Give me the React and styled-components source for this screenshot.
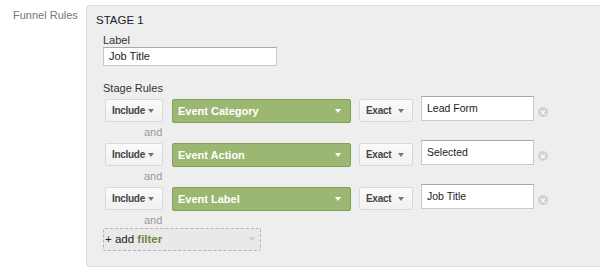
import React from 'react';
import styled, { createGlobalStyle } from 'styled-components';

const Global = createGlobalStyle`
  body {
    margin: 0;
    background: #fff;
    font-family: "Liberation Sans", Arial, sans-serif;
    color: #333;
  }
`;

const Page = styled.div`
  display: flex;
  width: 600px;
  height: 274px;
  overflow: hidden;
`;

const SideLabel = styled.div`
  width: 86px;
  flex-shrink: 0;
  padding: 9px 0 0 13px;
  box-sizing: border-box;
  font-size: 11px;
  color: #777;
`;

const Panel = styled.section`
  margin-top: 5px;
  width: 530px;
  height: 262px;
  box-sizing: border-box;
  background: #eeeeee;
  border: 1px solid #dadada;
  border-right: none;
  border-radius: 4px 0 0 4px;
  padding: 7px 0 0 9px;
`;

const StageTitle = styled.div`
  font-size: 11.5px;
  color: #222;
  line-height: 14px;
`;

const Field = styled.div`
  padding-left: 7px;
  margin-top: ${p => p.$top || 0}px;
`;

const FieldLabel = styled.div`
  font-size: 11px;
  color: #333;
  line-height: 13px;
`;

const TextInput = styled.div`
  width: ${p => p.$w}px;
  height: ${p => p.$h}px;
  box-sizing: border-box;
  background: #fff;
  border: 1px solid #c8c8c8;
  border-top-color: #a8a8a8;
  font-size: 11px;
  color: #222;
  padding: 0 0 1px 5px;
  display: flex;
  align-items: center;
`;

const Rules = styled.div`
  margin-top: 1px;
  display: flex;
  flex-direction: column;
`;

const Row = styled.div`
  display: flex;
  align-items: flex-start;
`;

const Btn = styled.div`
  width: ${p => p.$w}px;
  height: 23px;
  margin-top: 3px;
  margin-left: ${p => p.$ml || 0}px;
  box-sizing: border-box;
  background: linear-gradient(#fafafa, #f1f1f1);
  border: 1px solid #d9d9d9;
  border-radius: 2px;
  font-size: 10px;
  letter-spacing: -0.3px;
  font-weight: bold;
  color: #444;
  display: flex;
  align-items: center;
  justify-content: space-between;
  padding: 0 8px 0 6px;
`;

const Caret = styled.span`
  width: 0;
  height: 0;
  flex-shrink: 0;
  border-left: 3.5px solid transparent;
  border-right: 3.5px solid transparent;
  border-top: 4px solid ${p => p.$c || '#777'};
`;

const GreenSelect = styled.div`
  width: 179px;
  height: 24px;
  margin: 3px 0 0 9px;
  box-sizing: border-box;
  background: #9cb772;
  border: 1px solid #82a158;
  border-radius: 2px;
  font-size: 11px;
  font-weight: bold;
  color: #fff;
  display: flex;
  align-items: center;
  justify-content: space-between;
  padding: 0 9px 1px 5px;
`;

const ValueBox = styled(TextInput)`
  margin-left: 8px;
  font-size: 10.5px;
`;

const Clear = styled.span`
  width: 10px;
  height: 10px;
  margin: 11px 0 0 4px;
  border-radius: 50%;
  background: #d2d2d2;
  position: relative;
  &::before, &::after {
    content: '';
    position: absolute;
    left: 2px;
    top: 4.5px;
    width: 6px;
    height: 1px;
    background: #fff;
    transform: rotate(45deg);
  }
  &::after { transform: rotate(-45deg); }
`;

const And = styled.div`
  height: 17px;
  padding: 0 0 0 41px;
  font-size: 11px;
  color: #999;
  display: flex;
  align-items: center;
`;

const AddFilter = styled.div`
  width: 158px;
  height: 23px;
  box-sizing: border-box;
  border: 1px dashed #b5b5b5;
  border-radius: 2px;
  background: #e9e9e9;
  font-size: 11.5px;
  color: #222;
  display: flex;
  align-items: center;
  justify-content: space-between;
  padding: 0 5px 2px 1px;
  b { color: #6b8a45; font-weight: bold; }
`;

const rules = [
  { dim: 'Event Category', value: 'Lead Form' },
  { dim: 'Event Action', value: 'Selected' },
  { dim: 'Event Label', value: 'Job Title' },
];

export default function App() {
  return (
    <>
      <Global />
      <Page>
        <SideLabel>Funnel Rules</SideLabel>
        <Panel>
          <StageTitle>STAGE 1</StageTitle>
          <Field $top={7}>
            <FieldLabel>Label</FieldLabel>
            <TextInput $w={174} $h={19}>Job Title</TextInput>
          </Field>
          <Field $top={16}>
            <FieldLabel>Stage Rules</FieldLabel>
            <Rules>
              {rules.map(r => (
                <React.Fragment key={r.dim}>
                  <Row>
                    <Btn $w={58} $ml={2}>Include <Caret /></Btn>
                    <GreenSelect>{r.dim} <Caret $c="#fff" /></GreenSelect>
                    <Btn $w={54} $ml={8}>Exact <Caret /></Btn>
                    <ValueBox $w={113} $h={25}>{r.value}</ValueBox>
                    <Clear />
                  </Row>
                  <And>and</And>
                </React.Fragment>
              ))}
              <AddFilter>
                <span>+ add <b>filter</b></span>
                <Caret $c="#ccc" />
              </AddFilter>
            </Rules>
          </Field>
        </Panel>
      </Page>
    </>
  );
}
